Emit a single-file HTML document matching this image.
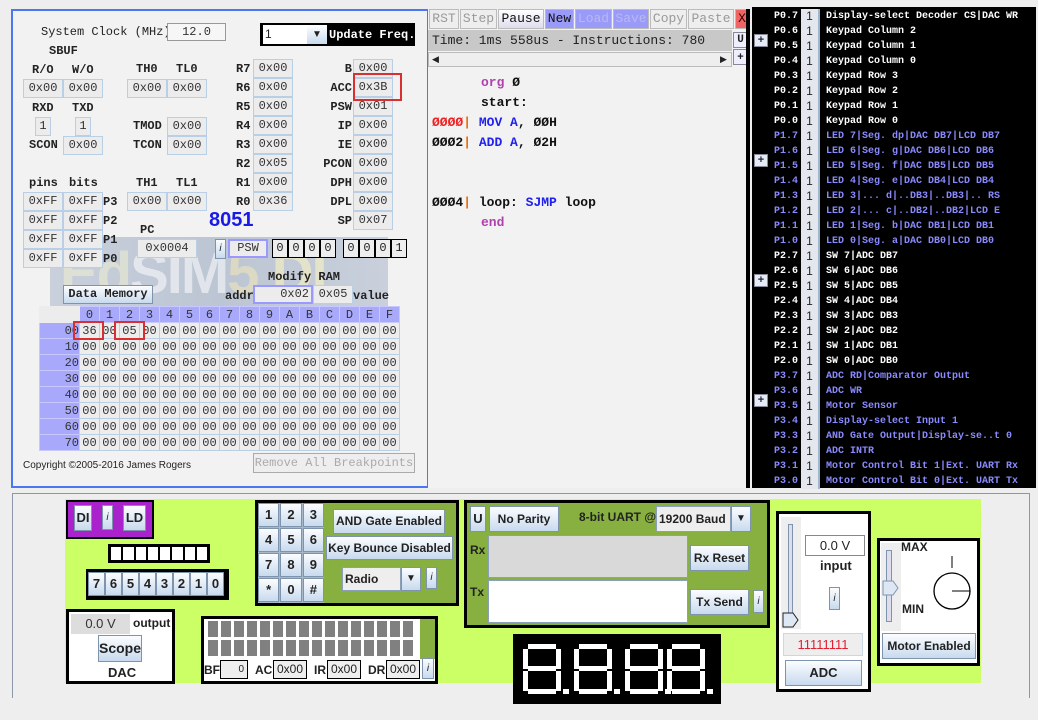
<!DOCTYPE html>
<html><head><meta charset="utf-8"><style>
*{margin:0;padding:0;box-sizing:border-box}
body{width:1038px;height:720px;background:#eeeeee;position:relative;overflow:hidden;font-family:"Liberation Mono",monospace;font-size:12px;color:#222}
.a{position:absolute}
.r{position:absolute;background:#ececec;border:1px solid #b8cfe5;text-align:center;font:12px/17px "Liberation Mono",monospace;color:#333}
.l{position:absolute;font:bold 12px "Liberation Mono",monospace;color:#222}
.btn{position:absolute;background:linear-gradient(#fbfdff,#c8daee);border:1px solid #7e94ad;font:bold 12px "Liberation Sans",sans-serif;color:#222;text-align:center}
.tb{position:absolute;top:9px;height:20px;background:#eeeeee;border:1px solid #bbb;font:13px/18px "Liberation Mono",monospace;text-align:center;color:#999}
.code{position:absolute;font:bold 13px "Liberation Mono",monospace;color:#111}
.pr{position:absolute;left:752px;width:284px;height:15px;font:bold 10px/15px "Liberation Mono",monospace}
.pr i{position:absolute;left:16px;width:30px;text-align:right;font-style:normal}
.pr b{position:absolute;left:49px;width:19px;height:15px;background:#e4e8ee;color:#222;text-align:center;font:12px/15px "Liberation Sans",sans-serif;border-right:2px solid #9fb6cf}
.pr span{position:absolute;left:74px;white-space:nowrap}
.w{color:#fff}.bl{color:#8a8aff}
.plus{position:absolute;left:754px;width:14px;height:13px;background:#e6ecf4;border:1px solid #889;font:bold 11px/11px sans-serif;text-align:center;color:#224}
table.m{position:absolute;left:39px;top:306px;border-collapse:collapse}
table.m td{width:20px;height:16px;padding:0;border:1px solid #b8cfe5;background:#ededed;text-align:center;font:12px/14px "Liberation Mono",monospace;color:#333}
table.m td.h{background:#a9a9fb;border-color:#c8c8ff}
table.m td.rl{width:40px;background:#a9a9fb;text-align:right;border-color:#c8c8ff}
.sw{display:inline-block;width:17px;height:24px;margin:0;background:linear-gradient(#fbfdff,#c8daee);border:1px solid #7e94ad;font:bold 13px/22px "Liberation Sans",sans-serif;text-align:center}
.kp{position:static;font:bold 13px/22px 'Liberation Sans';height:24px}
</style></head><body>

<!-- LEFT PANEL -->
<div class="a" style="left:11px;top:9px;width:418px;height:479px;border:2px solid #4a78f0;background:#f2f2f2"></div>
<!-- logo band (behind) -->
<div class="a" style="left:50px;top:237px;width:338px;height:69px;background:linear-gradient(90deg,#c9d0dc,#bcc5d3 50%,#c9d0dc)"></div>
<div class="a" style="left:60px;top:244px;font:bold 58px/60px 'Liberation Sans',sans-serif;color:#f0efd0;opacity:.55;letter-spacing:-2px">Ed<span style="color:#fff">SIM</span><span style="color:#f4e8b8">5</span> <span style="color:#fff8c0">DI</span></div>

<div class="l" style="left:41px;top:25px;font-weight:normal">System Clock (MHz)</div>
<div class="r" style="left:167px;top:23px;width:59px;height:18px;background:#f6f6f6;border-color:#999">12.0</div>
<div class="a" style="left:260px;top:23px;width:155px;height:23px;background:#000"></div>
<div class="a" style="left:263px;top:25px;width:44px;height:19px;background:#fff;font:12px/19px 'Liberation Sans';padding-left:2px">1</div>
<div class="a" style="left:307px;top:25px;width:20px;height:19px;background:linear-gradient(#fff,#c8daee);font:10px/19px sans-serif;text-align:center">▼</div>
<div class="l" style="left:329px;top:28px;color:#fff">Update Freq.</div>
<div class="l" style="left:49px;top:44px">SBUF</div>
<div class="l" style="left:32px;top:63px">R/O</div><div class="l" style="left:72px;top:63px">W/O</div>
<div class="r" style="left:23px;top:79px;width:40px;height:19px">0x00</div><div class="r" style="left:63px;top:79px;width:40px;height:19px">0x00</div>
<div class="l" style="left:136px;top:62px">TH0</div><div class="l" style="left:176px;top:62px">TL0</div>
<div class="r" style="left:127px;top:79px;width:40px;height:19px">0x00</div><div class="r" style="left:167px;top:79px;width:40px;height:19px">0x00</div>
<div class="l" style="left:32px;top:101px">RXD</div><div class="l" style="left:72px;top:101px">TXD</div>
<div class="r" style="left:35px;top:117px;width:16px;height:19px">1</div><div class="r" style="left:75px;top:117px;width:16px;height:19px">1</div>
<div class="l" style="left:29px;top:138px">SCON</div><div class="r" style="left:63px;top:136px;width:40px;height:19px">0x00</div>
<div class="l" style="left:133px;top:119px">TMOD</div><div class="r" style="left:167px;top:117px;width:40px;height:19px">0x00</div>
<div class="l" style="left:133px;top:138px">TCON</div><div class="r" style="left:167px;top:136px;width:40px;height:19px">0x00</div>
<div class="l" style="left:29px;top:176px">pins</div><div class="l" style="left:69px;top:176px">bits</div>
<div class="r" style="left:23px;top:192px;width:40px;height:19px">0xFF</div><div class="r" style="left:63px;top:192px;width:40px;height:19px">0xFF</div><div class="l" style="left:103px;top:195px">P3</div>
<div class="r" style="left:23px;top:211px;width:40px;height:19px">0xFF</div><div class="r" style="left:63px;top:211px;width:40px;height:19px">0xFF</div><div class="l" style="left:103px;top:214px">P2</div>
<div class="r" style="left:23px;top:230px;width:40px;height:19px">0xFF</div><div class="r" style="left:63px;top:230px;width:40px;height:19px">0xFF</div><div class="l" style="left:103px;top:233px">P1</div>
<div class="r" style="left:23px;top:249px;width:40px;height:19px">0xFF</div><div class="r" style="left:63px;top:249px;width:40px;height:19px">0xFF</div><div class="l" style="left:103px;top:252px">P0</div>
<div class="l" style="left:136px;top:176px">TH1</div><div class="l" style="left:176px;top:176px">TL1</div>
<div class="r" style="left:127px;top:192px;width:40px;height:19px">0x00</div><div class="r" style="left:167px;top:192px;width:40px;height:19px">0x00</div>

<!-- R regs -->
<div class="l" style="left:236px;top:62px">R7</div><div class="r" style="left:253px;top:59px;width:40px;height:19px">0x00</div>
<div class="l" style="left:236px;top:81px">R6</div><div class="r" style="left:253px;top:78px;width:40px;height:19px">0x00</div>
<div class="l" style="left:236px;top:100px">R5</div><div class="r" style="left:253px;top:97px;width:40px;height:19px">0x00</div>
<div class="l" style="left:236px;top:119px">R4</div><div class="r" style="left:253px;top:116px;width:40px;height:19px">0x00</div>
<div class="l" style="left:236px;top:138px">R3</div><div class="r" style="left:253px;top:135px;width:40px;height:19px">0x00</div>
<div class="l" style="left:236px;top:157px">R2</div><div class="r" style="left:253px;top:154px;width:40px;height:19px">0x05</div>
<div class="l" style="left:236px;top:176px">R1</div><div class="r" style="left:253px;top:173px;width:40px;height:19px">0x00</div>
<div class="l" style="left:236px;top:195px">R0</div><div class="r" style="left:253px;top:192px;width:40px;height:19px">0x36</div>
<!-- SFR -->
<div class="l" style="left:300px;width:52px;text-align:right;top:62px">B</div><div class="r" style="left:353px;top:59px;width:40px;height:19px">0x00</div>
<div class="l" style="left:300px;width:52px;text-align:right;top:81px">ACC</div><div class="r" style="left:353px;top:78px;width:40px;height:19px">0x3B</div>
<div class="l" style="left:300px;width:52px;text-align:right;top:100px">PSW</div><div class="r" style="left:353px;top:97px;width:40px;height:19px">0x01</div>
<div class="l" style="left:300px;width:52px;text-align:right;top:119px">IP</div><div class="r" style="left:353px;top:116px;width:40px;height:19px">0x00</div>
<div class="l" style="left:300px;width:52px;text-align:right;top:138px">IE</div><div class="r" style="left:353px;top:135px;width:40px;height:19px">0x00</div>
<div class="l" style="left:300px;width:52px;text-align:right;top:157px">PCON</div><div class="r" style="left:353px;top:154px;width:40px;height:19px">0x00</div>
<div class="l" style="left:300px;width:52px;text-align:right;top:176px">DPH</div><div class="r" style="left:353px;top:173px;width:40px;height:19px">0x00</div>
<div class="l" style="left:300px;width:52px;text-align:right;top:195px">DPL</div><div class="r" style="left:353px;top:192px;width:40px;height:19px">0x00</div>
<div class="l" style="left:300px;width:52px;text-align:right;top:214px">SP</div><div class="r" style="left:353px;top:211px;width:40px;height:19px">0x07</div>
<div class="a" style="left:353px;top:73px;width:49px;height:28px;border:2px solid #d83030"></div>

<div class="a" style="left:209px;top:209px;font:bold 20px 'Liberation Sans',sans-serif;color:#1a1ae6">8051</div>
<div class="l" style="left:140px;top:223px">PC</div>
<div class="r" style="left:137px;top:239px;width:60px;height:19px">0x0004</div>
<div class="btn" style="left:215px;top:239px;width:11px;height:20px;font:italic 10px/18px sans-serif">i</div>
<div class="r" style="left:228px;top:239px;width:40px;height:19px;border:2px solid #9999ff;line-height:15px">PSW</div>
<div class="a" style="left:272px;top:239px;font:12px/17px 'Liberation Mono'">
<span style="display:inline-block;width:16px;border:1px solid #000;text-align:center;background:#eee">0</span><span style="display:inline-block;width:16px;border:1px solid #000;text-align:center;background:#eee">0</span><span style="display:inline-block;width:16px;border:1px solid #000;text-align:center;background:#eee">0</span><span style="display:inline-block;width:16px;border:1px solid #000;text-align:center;background:#eee">0</span></div>
<div class="a" style="left:343px;top:239px;font:12px/17px 'Liberation Mono'">
<span style="display:inline-block;width:16px;border:1px solid #000;text-align:center;background:#eee">0</span><span style="display:inline-block;width:16px;border:1px solid #000;text-align:center;background:#eee">0</span><span style="display:inline-block;width:16px;border:1px solid #000;text-align:center;background:#eee">0</span><span style="display:inline-block;width:16px;border:1px solid #000;text-align:center;background:#eee">1</span></div>

<div class="l" style="left:268px;top:270px">Modify RAM</div>
<div class="btn" style="left:63px;top:285px;width:90px;height:19px;font:bold 12px/17px 'Liberation Mono'">Data Memory</div>
<div class="l" style="left:225px;top:289px">addr</div>
<div class="r" style="left:253px;top:285px;width:60px;height:19px;border:2px solid #9999ff;text-align:right;padding-right:2px;line-height:15px">0x02</div>
<div class="r" style="left:313px;top:285px;width:40px;height:19px">0x05</div>
<div class="l" style="left:353px;top:289px">value</div>

<table class="m">
<tr><td class="rl" style="background:#ececec;border-color:#ececec"></td><td class="h">0</td><td class="h">1</td><td class="h">2</td><td class="h">3</td><td class="h">4</td><td class="h">5</td><td class="h">6</td><td class="h">7</td><td class="h">8</td><td class="h">9</td><td class="h">A</td><td class="h">B</td><td class="h">C</td><td class="h">D</td><td class="h">E</td><td class="h">F</td></tr>
<tr><td class="rl">00</td><td>36</td><td>00</td><td>05</td><td>00</td><td>00</td><td>00</td><td>00</td><td>00</td><td>00</td><td>00</td><td>00</td><td>00</td><td>00</td><td>00</td><td>00</td><td>00</td></tr>
<tr><td class="rl">10</td><td>00</td><td>00</td><td>00</td><td>00</td><td>00</td><td>00</td><td>00</td><td>00</td><td>00</td><td>00</td><td>00</td><td>00</td><td>00</td><td>00</td><td>00</td><td>00</td></tr>
<tr><td class="rl">20</td><td>00</td><td>00</td><td>00</td><td>00</td><td>00</td><td>00</td><td>00</td><td>00</td><td>00</td><td>00</td><td>00</td><td>00</td><td>00</td><td>00</td><td>00</td><td>00</td></tr>
<tr><td class="rl">30</td><td>00</td><td>00</td><td>00</td><td>00</td><td>00</td><td>00</td><td>00</td><td>00</td><td>00</td><td>00</td><td>00</td><td>00</td><td>00</td><td>00</td><td>00</td><td>00</td></tr>
<tr><td class="rl">40</td><td>00</td><td>00</td><td>00</td><td>00</td><td>00</td><td>00</td><td>00</td><td>00</td><td>00</td><td>00</td><td>00</td><td>00</td><td>00</td><td>00</td><td>00</td><td>00</td></tr>
<tr><td class="rl">50</td><td>00</td><td>00</td><td>00</td><td>00</td><td>00</td><td>00</td><td>00</td><td>00</td><td>00</td><td>00</td><td>00</td><td>00</td><td>00</td><td>00</td><td>00</td><td>00</td></tr>
<tr><td class="rl">60</td><td>00</td><td>00</td><td>00</td><td>00</td><td>00</td><td>00</td><td>00</td><td>00</td><td>00</td><td>00</td><td>00</td><td>00</td><td>00</td><td>00</td><td>00</td><td>00</td></tr>
<tr><td class="rl">70</td><td>00</td><td>00</td><td>00</td><td>00</td><td>00</td><td>00</td><td>00</td><td>00</td><td>00</td><td>00</td><td>00</td><td>00</td><td>00</td><td>00</td><td>00</td><td>00</td></tr>
</table>
<div class="a" style="left:73px;top:321px;width:31px;height:19px;border:2px solid #d83030"></div>
<div class="a" style="left:114px;top:321px;width:31px;height:19px;border:2px solid #d83030"></div>
<div class="a" style="left:23px;top:460px;font:10px 'Liberation Sans',sans-serif;color:#222">Copyright ©2005-2016 James Rogers</div>
<div class="a" style="left:253px;top:453px;width:162px;height:20px;border:1px solid #aaa;background:#eee;font:12px/18px 'Liberation Mono';color:#aaa;text-align:center">Remove All Breakpoints</div>

<!-- MIDDLE -->
<div class="a" style="left:428px;top:9px;width:322px;height:479px;background:#f2f2f2"></div>
<div class="tb" style="left:429px;width:30px">RST</div>
<div class="tb" style="left:460px;width:37px">Step</div>
<div class="tb" style="left:498px;width:46px;color:#111;background:linear-gradient(#fff,#dde)">Pause</div>
<div class="tb" style="left:545px;width:29px;color:#111;background:#9a9af8">New</div>
<div class="tb" style="left:575px;width:37px;color:#b8b8f0;background:#9a9af8">Load</div>
<div class="tb" style="left:613px;width:36px;color:#b8b8f0;background:#9a9af8">Save</div>
<div class="tb" style="left:650px;width:37px">Copy</div>
<div class="tb" style="left:688px;width:46px">Paste</div>
<div class="tb" style="left:735px;width:14px;background:#f06464;color:#300">X</div>
<div class="a" style="left:428px;top:30px;width:304px;height:21px;background:#c8c8c8;font:13px/21px 'Liberation Mono';padding-left:4px;color:#222">Time: 1ms 558us - Instructions: 780</div>
<div class="a" style="left:733px;top:32px;width:15px;height:16px;background:#eef;border:1px solid #889;font:bold 11px/14px 'Liberation Mono';text-align:center">U</div>
<div class="a" style="left:733px;top:49px;width:15px;height:16px;background:#eef;border:1px solid #889;font:bold 11px/14px sans-serif;text-align:center">+</div>
<div class="a" style="left:428px;top:52px;width:304px;height:15px;background:#eee;border:1px solid #bbb"></div>
<div class="a" style="left:432px;top:54px;font:9px sans-serif">◀</div>
<div class="a" style="left:720px;top:54px;font:9px sans-serif">▶</div>
<div class="a" style="left:746px;top:9px;width:4px;height:479px;background:#000"></div>
<div class="code" style="left:481px;top:75px;color:#b040b0">org <span style="color:#111">Ø</span></div>
<div class="code" style="left:481px;top:95px">start:</div>
<div class="code" style="left:432px;top:115px"><span style="color:#f02020">ØØØØ</span><span style="color:#e07010">|</span> <span style="color:#2020f0">MOV A</span>, ØØH</div>
<div class="code" style="left:432px;top:135px">ØØØ2<span style="color:#e07010">|</span> <span style="color:#2020f0">ADD A</span>, Ø2H</div>
<div class="code" style="left:432px;top:195px">ØØØ4<span style="color:#e07010">|</span> loop: <span style="color:#2020f0">SJMP</span> loop</div>
<div class="code" style="left:481px;top:215px;color:#b040b0">end</div>

<!-- RIGHT -->
<div class="a" style="left:752px;top:7px;width:284px;height:481px;background:#000"></div>
<div class="pr w" style="top:9px"><i>P0.7</i><b>1</b><span>Display-select Decoder CS|DAC WR</span></div>
<div class="pr w" style="top:24px"><i>P0.6</i><b>1</b><span>Keypad Column 2</span></div>
<div class="pr w" style="top:39px"><i>P0.5</i><b>1</b><span>Keypad Column 1</span></div>
<div class="pr w" style="top:54px"><i>P0.4</i><b>1</b><span>Keypad Column 0</span></div>
<div class="pr w" style="top:69px"><i>P0.3</i><b>1</b><span>Keypad Row 3</span></div>
<div class="pr w" style="top:84px"><i>P0.2</i><b>1</b><span>Keypad Row 2</span></div>
<div class="pr w" style="top:99px"><i>P0.1</i><b>1</b><span>Keypad Row 1</span></div>
<div class="pr w" style="top:114px"><i>P0.0</i><b>1</b><span>Keypad Row 0</span></div>
<div class="pr bl" style="top:129px"><i>P1.7</i><b>1</b><span>LED 7|Seg. dp|DAC DB7|LCD DB7</span></div>
<div class="pr bl" style="top:144px"><i>P1.6</i><b>1</b><span>LED 6|Seg. g|DAC DB6|LCD DB6</span></div>
<div class="pr bl" style="top:159px"><i>P1.5</i><b>1</b><span>LED 5|Seg. f|DAC DB5|LCD DB5</span></div>
<div class="pr bl" style="top:174px"><i>P1.4</i><b>1</b><span>LED 4|Seg. e|DAC DB4|LCD DB4</span></div>
<div class="pr bl" style="top:189px"><i>P1.3</i><b>1</b><span>LED 3|... d|..DB3|..DB3|.. RS</span></div>
<div class="pr bl" style="top:204px"><i>P1.2</i><b>1</b><span>LED 2|... c|..DB2|..DB2|LCD E</span></div>
<div class="pr bl" style="top:219px"><i>P1.1</i><b>1</b><span>LED 1|Seg. b|DAC DB1|LCD DB1</span></div>
<div class="pr bl" style="top:234px"><i>P1.0</i><b>1</b><span>LED 0|Seg. a|DAC DB0|LCD DB0</span></div>
<div class="pr w" style="top:249px"><i>P2.7</i><b>1</b><span>SW 7|ADC DB7</span></div>
<div class="pr w" style="top:264px"><i>P2.6</i><b>1</b><span>SW 6|ADC DB6</span></div>
<div class="pr w" style="top:279px"><i>P2.5</i><b>1</b><span>SW 5|ADC DB5</span></div>
<div class="pr w" style="top:294px"><i>P2.4</i><b>1</b><span>SW 4|ADC DB4</span></div>
<div class="pr w" style="top:309px"><i>P2.3</i><b>1</b><span>SW 3|ADC DB3</span></div>
<div class="pr w" style="top:324px"><i>P2.2</i><b>1</b><span>SW 2|ADC DB2</span></div>
<div class="pr w" style="top:339px"><i>P2.1</i><b>1</b><span>SW 1|ADC DB1</span></div>
<div class="pr w" style="top:354px"><i>P2.0</i><b>1</b><span>SW 0|ADC DB0</span></div>
<div class="pr bl" style="top:369px"><i>P3.7</i><b>1</b><span>ADC RD|Comparator Output</span></div>
<div class="pr bl" style="top:384px"><i>P3.6</i><b>1</b><span>ADC WR</span></div>
<div class="pr bl" style="top:399px"><i>P3.5</i><b>1</b><span>Motor Sensor</span></div>
<div class="pr bl" style="top:414px"><i>P3.4</i><b>1</b><span>Display-select Input 1</span></div>
<div class="pr bl" style="top:429px"><i>P3.3</i><b>1</b><span>AND Gate Output|Display-se..t 0</span></div>
<div class="pr bl" style="top:444px"><i>P3.2</i><b>1</b><span>ADC INTR</span></div>
<div class="pr bl" style="top:459px"><i>P3.1</i><b>1</b><span>Motor Control Bit 1|Ext. UART Rx</span></div>
<div class="pr bl" style="top:474px"><i>P3.0</i><b>1</b><span>Motor Control Bit 0|Ext. UART Tx</span></div>
<div class="plus" style="top:34px">+</div><div class="plus" style="top:154px">+</div><div class="plus" style="top:274px">+</div><div class="plus" style="top:394px">+</div>

<!-- BOTTOM -->
<div class="a" style="left:12px;top:493px;width:1018px;height:205px;border-top:1px solid #8a98a8;border-left:1px solid #8a98a8;border-right:1px solid #8a98a8"></div>
<div class="a" style="left:65px;top:499px;width:916px;height:184px;background:#ccff66"></div>

<div class="a" style="left:66px;top:500px;width:88px;height:39px;background:#aa22cc;border:2px solid #000"></div>
<div class="btn" style="left:74px;top:505px;width:18px;height:26px;font:bold 13px/24px 'Liberation Sans'">DI</div>
<div class="btn" style="left:102px;top:505px;width:11px;height:25px;font:italic 10px/23px sans-serif">i</div>
<div class="btn" style="left:123px;top:505px;width:23px;height:26px;font:bold 13px/24px 'Liberation Sans'">LD</div>
<div class="a" style="left:108px;top:544px;width:102px;height:19px;background:#000;padding:3px 3px;display:flex;gap:2px">
<div style="flex:1;background:#fff"></div><div style="flex:1;background:#fff"></div><div style="flex:1;background:#fff"></div><div style="flex:1;background:#fff"></div><div style="flex:1;background:#fff"></div><div style="flex:1;background:#fff"></div><div style="flex:1;background:#fff"></div><div style="flex:1;background:#fff"></div></div>
<div class="a" style="left:86px;top:569px;width:143px;height:31px;background:#000;padding:3px 2px;font-size:0;white-space:nowrap">
<span class="sw">7</span><span class="sw">6</span><span class="sw">5</span><span class="sw">4</span><span class="sw">3</span><span class="sw">2</span><span class="sw">1</span><span class="sw">0</span></div>

<div class="a" style="left:66px;top:609px;width:109px;height:75px;background:#fff;border:3px solid #000"></div>
<div class="a" style="left:71px;top:614px;width:59px;height:20px;background:#ddd;font:13px/20px 'Liberation Sans';text-align:center;color:#333">0.0 V</div>
<div class="a" style="left:133px;top:616px;font:bold 12px 'Liberation Sans';color:#222">output</div>
<div class="btn" style="left:98px;top:635px;width:44px;height:27px;font:bold 14px/25px 'Liberation Sans'">Scope</div>
<div class="a" style="left:108px;top:665px;font:bold 13px 'Liberation Sans'">DAC</div>

<!-- keypad -->
<div class="a" style="left:255px;top:500px;width:204px;height:106px;background:#88b040;border:3px solid #000"></div>
<div class="a" style="left:258px;top:503px;width:66px;height:100px;display:grid;grid-template-columns:repeat(3,1fr);grid-template-rows:repeat(4,24px);gap:1px;background:#a8b8c8">
<div class="btn kp">1</div><div class="btn kp">2</div><div class="btn kp">3</div>
<div class="btn kp">4</div><div class="btn kp">5</div><div class="btn kp">6</div>
<div class="btn kp">7</div><div class="btn kp">8</div><div class="btn kp">9</div>
<div class="btn kp">*</div><div class="btn kp">0</div><div class="btn kp">#</div></div>
<div class="btn" style="left:333px;top:509px;width:112px;height:25px;font:bold 12px/23px 'Liberation Sans'">AND Gate Enabled</div>
<div class="btn" style="left:326px;top:536px;width:127px;height:24px;font:bold 12px/22px 'Liberation Sans'">Key Bounce Disabled</div>
<div class="a" style="left:342px;top:567px;width:59px;height:24px;background:#eee;border:1px solid #8a9fb8;font:bold 12px/22px 'Liberation Sans';padding-left:2px">Radio</div>
<div class="btn" style="left:401px;top:567px;width:20px;height:24px;font:10px/22px sans-serif">▼</div>
<div class="btn" style="left:426px;top:567px;width:11px;height:22px;font:italic 10px/20px sans-serif">i</div>

<!-- LCD -->
<div class="a" style="left:201px;top:616px;width:237px;height:68px;background:#fff;border:3px solid #000"></div>
<div class="a" style="left:420px;top:619px;width:15px;height:40px;background:#88b040"></div>
<svg class="a" style="left:208px;top:621px" width="212" height="38">
<g fill="#808080">
<rect x="0" y="0" width="10" height="16"/><rect x="13" y="0" width="10" height="16"/><rect x="26" y="0" width="10" height="16"/><rect x="39" y="0" width="10" height="16"/><rect x="52" y="0" width="10" height="16"/><rect x="65" y="0" width="10" height="16"/><rect x="78" y="0" width="10" height="16"/><rect x="91" y="0" width="10" height="16"/><rect x="104" y="0" width="10" height="16"/><rect x="117" y="0" width="10" height="16"/><rect x="130" y="0" width="10" height="16"/><rect x="143" y="0" width="10" height="16"/><rect x="156" y="0" width="10" height="16"/><rect x="169" y="0" width="10" height="16"/><rect x="182" y="0" width="10" height="16"/><rect x="195" y="0" width="10" height="16"/>
<rect x="0" y="19" width="10" height="16"/><rect x="13" y="19" width="10" height="16"/><rect x="26" y="19" width="10" height="16"/><rect x="39" y="19" width="10" height="16"/><rect x="52" y="19" width="10" height="16"/><rect x="65" y="19" width="10" height="16"/><rect x="78" y="19" width="10" height="16"/><rect x="91" y="19" width="10" height="16"/><rect x="104" y="19" width="10" height="16"/><rect x="117" y="19" width="10" height="16"/><rect x="130" y="19" width="10" height="16"/><rect x="143" y="19" width="10" height="16"/><rect x="156" y="19" width="10" height="16"/><rect x="169" y="19" width="10" height="16"/><rect x="182" y="19" width="10" height="16"/><rect x="195" y="19" width="10" height="16"/></g></svg>
<div class="a" style="left:204px;top:661px;font:bold 12px/18px 'Liberation Sans'">BF</div>
<div class="a" style="left:220px;top:660px;width:28px;height:19px;background:#eee;border:1px solid #000;font:10px/17px 'Liberation Sans';text-align:right;padding-right:3px">0</div>
<div class="a" style="left:255px;top:661px;font:bold 12px/18px 'Liberation Sans'">AC</div>
<div class="a" style="left:273px;top:660px;width:34px;height:19px;background:#eee;border:1px solid #000;font:12px/17px 'Liberation Sans';text-align:center">0x00</div>
<div class="a" style="left:314px;top:661px;font:bold 12px/18px 'Liberation Sans'">IR</div>
<div class="a" style="left:327px;top:660px;width:34px;height:19px;background:#eee;border:1px solid #000;font:12px/17px 'Liberation Sans';text-align:center">0x00</div>
<div class="a" style="left:368px;top:661px;font:bold 12px/18px 'Liberation Sans'">DR</div>
<div class="a" style="left:386px;top:660px;width:34px;height:19px;background:#eee;border:1px solid #000;font:12px/17px 'Liberation Sans';text-align:center">0x00</div>
<div class="btn" style="left:422px;top:658px;width:12px;height:21px;font:italic 10px/19px sans-serif">i</div>

<!-- UART -->
<div class="a" style="left:464px;top:500px;width:306px;height:128px;background:#88b040;border:3px solid #000"></div>
<div class="btn" style="left:470px;top:506px;width:16px;height:26px;font:bold 13px/24px 'Liberation Sans'">U</div>
<div class="btn" style="left:489px;top:506px;width:70px;height:26px;font:bold 12px/24px 'Liberation Sans'">No Parity</div>
<div class="a" style="left:579px;top:510px;font:bold 12px 'Liberation Sans';color:#222">8-bit UART @</div>
<div class="a" style="left:656px;top:506px;width:75px;height:26px;background:#eee;border:1px solid #8a9fb8;font:bold 12px/24px 'Liberation Sans';padding-left:2px">19200 Baud</div>
<div class="btn" style="left:731px;top:506px;width:20px;height:26px;font:10px/24px sans-serif">▼</div>
<div class="a" style="left:470px;top:543px;font:bold 12px 'Liberation Sans'">Rx</div>
<div class="a" style="left:470px;top:585px;font:bold 12px 'Liberation Sans'">Tx</div>
<div class="a" style="left:488px;top:535px;width:200px;height:43px;background:#d9d9d9;border:1px solid #8a9fb8"></div>
<div class="a" style="left:488px;top:580px;width:200px;height:43px;background:#fff;border:1px solid #8a9fb8"></div>
<div class="btn" style="left:690px;top:545px;width:59px;height:26px;font:bold 12px/24px 'Liberation Sans'">Rx Reset</div>
<div class="btn" style="left:690px;top:589px;width:59px;height:26px;font:bold 12px/24px 'Liberation Sans'">Tx Send</div>
<div class="btn" style="left:753px;top:590px;width:11px;height:23px;font:italic 10px/21px sans-serif">i</div>

<!-- 7-seg -->
<svg class="a" style="left:513px;top:634px" width="208" height="70">
<rect width="208" height="70" fill="#000"/>
<g fill="#fff">
<g transform="translate(10,10)"><rect x="5" y="0" width="28" height="5"/><rect x="0" y="5" width="5" height="20"/><rect x="33" y="5" width="5" height="20"/><rect x="5" y="22" width="28" height="5"/><rect x="0" y="27" width="5" height="20"/><rect x="33" y="27" width="5" height="20"/><rect x="5" y="45" width="28" height="5"/><rect x="40" y="45" width="6" height="5"/></g>
<g transform="translate(61,10)"><rect x="5" y="0" width="28" height="5"/><rect x="0" y="5" width="5" height="20"/><rect x="33" y="5" width="5" height="20"/><rect x="5" y="22" width="28" height="5"/><rect x="0" y="27" width="5" height="20"/><rect x="33" y="27" width="5" height="20"/><rect x="5" y="45" width="28" height="5"/><rect x="40" y="45" width="6" height="5"/></g>
<g transform="translate(112,10)"><rect x="5" y="0" width="28" height="5"/><rect x="0" y="5" width="5" height="20"/><rect x="33" y="5" width="5" height="20"/><rect x="5" y="22" width="28" height="5"/><rect x="0" y="27" width="5" height="20"/><rect x="33" y="27" width="5" height="20"/><rect x="5" y="45" width="28" height="5"/><rect x="40" y="45" width="6" height="5"/></g>
<g transform="translate(154,10)"><rect x="5" y="0" width="28" height="5"/><rect x="0" y="5" width="5" height="20"/><rect x="33" y="5" width="5" height="20"/><rect x="5" y="22" width="28" height="5"/><rect x="0" y="27" width="5" height="20"/><rect x="33" y="27" width="5" height="20"/><rect x="5" y="45" width="28" height="5"/><rect x="40" y="45" width="6" height="5"/></g>
</g></svg>

<!-- ADC -->
<div class="a" style="left:776px;top:511px;width:95px;height:181px;background:#fff;border:3px solid #000"></div>
<div class="a" style="left:781px;top:517px;width:20px;height:112px;background:#eee"></div>
<div class="a" style="left:788px;top:524px;width:5px;height:100px;border:1px solid #7e94ad;background:#dde"></div>
<svg class="a" style="left:782px;top:612px" width="18" height="16"><path d="M1 1H11L16 8L11 15H1Z" fill="#dde8f4" stroke="#222"/></svg>
<div class="a" style="left:805px;top:535px;width:60px;height:21px;background:#fff;border:1px solid #888;font:13px/19px 'Liberation Sans';text-align:center">0.0 V</div>
<div class="a" style="left:820px;top:558px;font:bold 13px 'Liberation Sans'">input</div>
<div class="btn" style="left:829px;top:587px;width:11px;height:23px;font:italic 10px/21px sans-serif">i</div>
<div class="a" style="left:783px;top:633px;width:80px;height:23px;background:#eee;border:1px solid #c8d8e8;font:13px/21px 'Liberation Sans';color:#e02030;text-align:center">11111111</div>
<div class="btn" style="left:785px;top:660px;width:77px;height:26px;font:bold 13px/24px 'Liberation Sans'">ADC</div>

<!-- Motor -->
<div class="a" style="left:877px;top:538px;width:103px;height:128px;background:#fff;border:3px solid #000"></div>
<div class="a" style="left:881px;top:543px;width:20px;height:88px;background:#eee"></div>
<div class="a" style="left:886px;top:550px;width:6px;height:72px;border:1px solid #7e94ad;background:#dde"></div>
<svg class="a" style="left:882px;top:580px" width="18" height="16"><path d="M1 1H11L16 8L11 15H1Z" fill="#dde8f4" stroke="#7e94ad"/></svg>
<div class="a" style="left:901px;top:540px;font:bold 12px 'Liberation Sans'">MAX</div>
<div class="a" style="left:902px;top:602px;font:bold 12px 'Liberation Sans'">MIN</div>
<svg class="a" style="left:930px;top:556px" width="50" height="60"><circle cx="22" cy="35" r="18" fill="none" stroke="#000" stroke-width="1.3"/><line x1="22" y1="0" x2="22" y2="12" stroke="#000"/><line x1="22" y1="35" x2="40" y2="35" stroke="#000"/></svg>
<div class="btn" style="left:882px;top:633px;width:94px;height:26px;font:bold 12px/24px 'Liberation Sans'">Motor Enabled</div>
</body></html>
